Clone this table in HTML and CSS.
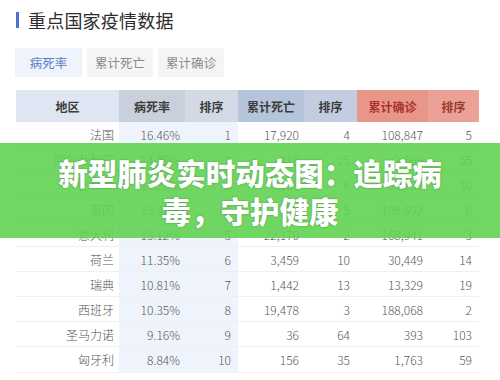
FILE: index.html
```html
<!DOCTYPE html>
<html lang="zh-CN">
<head>
<meta charset="utf-8">
<link rel="stylesheet" href="styles.css">
</head>
<body>
<div class="page">
  <div class="title"><span class="bar"></span><h1>重点国家疫情数据</h1></div>
  <div class="tabs">
    <div class="tab active">病死率</div>
    <div class="tab">累计死亡</div>
    <div class="tab">累计确诊</div>
  </div>
  <table class="data">
    <colgroup>
      <col class="c1"><col class="c2"><col class="c3"><col class="c4"><col class="c5"><col class="c6"><col class="c7">
    </colgroup>
    <thead>
      <tr>
        <th class="h-area">地区</th>
        <th class="h-rate">病死率</th>
        <th class="h-rank1">排序</th>
        <th class="h-death">累计死亡</th>
        <th class="h-rank2">排序</th>
        <th class="h-conf">累计确诊</th>
        <th class="h-rank3">排序</th>
      </tr>
    </thead>
    <tbody>
      <tr><td>法国</td><td class="hl">16.46%</td><td class="hl">1</td><td>17,920</td><td>4</td><td>108,847</td><td>5</td></tr>
      <tr><td>阿尔及利亚</td><td class="hl">14.79%</td><td class="hl">2</td><td>418</td><td>25</td><td>2,569</td><td>55</td></tr>
      <tr><td>比利时</td><td class="hl">14.28%</td><td class="hl">3</td><td>5,163</td><td>6</td><td>36,138</td><td>10</td></tr>
      <tr><td>英国</td><td class="hl">13.41%</td><td class="hl">4</td><td>14,576</td><td>5</td><td>108,692</td><td>6</td></tr>
      <tr><td>意大利</td><td class="hl">13.12%</td><td class="hl">5</td><td>22,170</td><td>2</td><td>168,941</td><td>3</td></tr>
      <tr><td>荷兰</td><td class="hl">11.35%</td><td class="hl">6</td><td>3,459</td><td>10</td><td>30,449</td><td>14</td></tr>
      <tr><td>瑞典</td><td class="hl">10.81%</td><td class="hl">7</td><td>1,442</td><td>13</td><td>13,329</td><td>19</td></tr>
      <tr><td>西班牙</td><td class="hl">10.35%</td><td class="hl">8</td><td>19,478</td><td>3</td><td>188,068</td><td>2</td></tr>
      <tr><td>圣马力诺</td><td class="hl">9.16%</td><td class="hl">9</td><td>36</td><td>64</td><td>393</td><td>103</td></tr>
      <tr><td>匈牙利</td><td class="hl">8.84%</td><td class="hl">10</td><td>156</td><td>35</td><td>1,763</td><td>59</td></tr>
    </tbody>
  </table>
</div>
<div class="banner">
  <p>新型肺炎实时动态图：追踪病<br>毒，守护健康</p>
</div>
</body>
</html>
```

FILE: styles.css
```css
html, body {
  margin: 0;
  padding: 0;
  background: #ffffff;
  width: 500px;
  height: 380px;
  overflow: hidden;
  font-family: "Noto Sans CJK SC", "Noto Sans", sans-serif;
}

.page {
  padding: 10px 21px 0 16px;
}

.title {
  display: flex;
  align-items: center;
  gap: 9px;
  height: 20px;
}

.bar {
  width: 3px;
  height: 16px;
  background: #4f6fd0;
}

.title h1 {
  margin: 0;
  font-size: 18px;
  font-weight: 400;
  color: #2d2d2d;
  line-height: 20px;
  letter-spacing: 0.2px;
}

.tabs {
  display: flex;
  gap: 5px;
  margin-top: 18px;
  margin-left: -1px;
}

.tab {
  width: 66px;
  height: 29px;
  line-height: 29px;
  text-align: center;
  font-size: 12.5px;
  color: #8a8a8a;
  background: #f5f5f5;
}

.tab.active {
  width: 67px;
  background: #eef3fc;
  color: #5a7bc8;
}

.data {
  margin-top: 13px;
  width: 463px;
  border-collapse: collapse;
  table-layout: fixed;
}

.c1 { width: 103px; }
.c2 { width: 66px; }
.c3 { width: 53px; }
.c4 { width: 66px; }
.c5 { width: 53px; }
.c6 { width: 71px; }
.c7 { width: 51px; }

.data th {
  height: 32px;
  padding: 0;
  font-size: 12px;
  font-weight: 700;
  color: #3c3c3c;
  text-align: center;
}

.h-area { background: #dfe6f3; }
.h-rate { background: #c9d0dc; }
.h-rank1 { background: #d4dae5; }
.h-death { background: #b6c4db; }
.h-rank2 { background: #c2cde1; }
.h-conf { background: #e8968a; color: #a8332a !important; }
.h-rank3 { background: #eca196; color: #9a3a30 !important; }

.data td {
  height: 24px;
  padding: 0 5px 0 0;
  font-size: 12px;
  font-weight: 300;
  color: #555555;
  text-align: right;
  border-bottom: 1px solid #efefef;
  white-space: nowrap;
}

.data tbody tr:last-child td {
  height: 25px;
}

.data td:nth-child(3),
.data td:nth-child(5),
.data td:nth-child(7) {
  padding-right: 7px;
}

.data td.hl {
  background: #eff4fc;
}

.banner {
  position: absolute;
  left: 0;
  top: 143px;
  width: 500px;
  height: 95px;
  background: rgba(96, 211, 82, 0.9);
  display: flex;
  align-items: center;
  justify-content: center;
}

.banner p {
  margin: 0;
  text-align: center;
  color: #ffffff;
  font-size: 29.5px;
  line-height: 38px;
  font-weight: 900;
  text-shadow: 0 0 2px rgba(0, 0, 0, 0.35);
}
```
